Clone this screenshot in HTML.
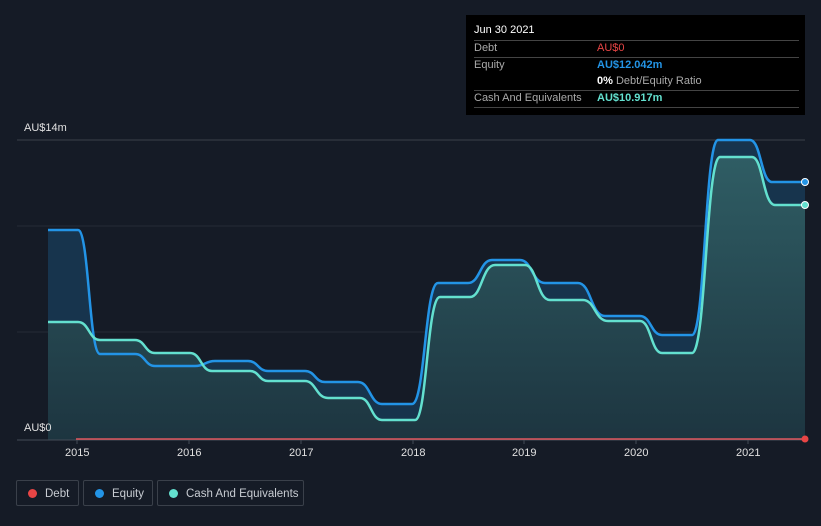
<!DOCTYPE html>
<html><head><style>
body{margin:0;width:821px;height:526px;background:#151b26;font-family:"Liberation Sans",sans-serif;overflow:hidden;position:relative}
.tt{position:absolute;left:466px;top:15px;width:339px;height:100px;background:#000;color:#aaa;font-size:11px}
.tt .r{position:absolute;left:8px;right:6px;border-top:1px solid #444;height:16px}
.tt span{position:absolute;top:1px;white-space:nowrap}
.lg{position:absolute;top:480px;height:26px;border:1px solid #3a404a;border-radius:2px;color:#c8ccd2;font-size:11.5px;line-height:26px;box-sizing:border-box;white-space:nowrap}
.lg i{position:absolute;left:11px;top:8px;width:9px;height:9px;border-radius:50%}
.lg b{font-weight:normal;position:absolute;left:28px;top:0;white-space:nowrap}
.ax{position:absolute;color:#e0e0e0;font-size:11px}
</style></head><body>
<svg width="821" height="526" style="position:absolute;left:0;top:0">
<defs><linearGradient id="g" x1="0" y1="0" x2="0" y2="1"><stop offset="0" stop-color="#2f5d64"/><stop offset="1" stop-color="#1d3540"/></linearGradient></defs>
<line x1="17" y1="140" x2="805" y2="140" stroke="#3a404a"/>
<line x1="17" y1="226" x2="805" y2="226" stroke="#252b36"/>
<line x1="17" y1="332" x2="805" y2="332" stroke="#252b36"/>
<path d="M48 230 L78 230 C89 230 89 354 100 354 L135 354 C145 354 145 366 155 366 L195 366 C205 366 205 361 215 361 L248 361 C258 361 258 371 268 371 L305 371 C315 371 315 382 325 382 L358 382 C370 382 370 404 382 404 L412 404 C425 404 425 283 438 283 L468 283 C480 283 480 260 492 260 L520 260 C532 260 532 283 545 283 L578 283 C591 283 591 316 605 316 L640 316 C651 316 651 335 662 335 L692 335 C705 335 705 140 718 140 L750 140 C761 140 761 182 772 182 L805 182 L805 440 L48 440Z" fill="#17344d"/>
<path d="M48 322 L78 322 C89 322 89 340 100 340 L135 340 C145 340 145 353 155 353 L190 353 C201 353 201 371 212 371 L250 371 C259 371 259 381 268 381 L305 381 C316 381 316 398 328 398 L360 398 C371 398 371 420 382 420 L415 420 C427 420 427 297 440 297 L470 297 C482 297 482 265 495 265 L525 265 C537 265 537 300 550 300 L583 300 C595 300 595 321 608 321 L640 321 C651 321 651 353 662 353 L692 353 C706 353 706 157 720 157 L752 157 C763 157 763 205 775 205 L805 205 L805 440 L48 440Z" fill="url(#g)"/>
<path d="M48 230 L78 230 C89 230 89 354 100 354 L135 354 C145 354 145 366 155 366 L195 366 C205 366 205 361 215 361 L248 361 C258 361 258 371 268 371 L305 371 C315 371 315 382 325 382 L358 382 C370 382 370 404 382 404 L412 404 C425 404 425 283 438 283 L468 283 C480 283 480 260 492 260 L520 260 C532 260 532 283 545 283 L578 283 C591 283 591 316 605 316 L640 316 C651 316 651 335 662 335 L692 335 C705 335 705 140 718 140 L750 140 C761 140 761 182 772 182 L805 182" fill="none" stroke="#2394e6" stroke-width="2.5"/>
<path d="M48 322 L78 322 C89 322 89 340 100 340 L135 340 C145 340 145 353 155 353 L190 353 C201 353 201 371 212 371 L250 371 C259 371 259 381 268 381 L305 381 C316 381 316 398 328 398 L360 398 C371 398 371 420 382 420 L415 420 C427 420 427 297 440 297 L470 297 C482 297 482 265 495 265 L525 265 C537 265 537 300 550 300 L583 300 C595 300 595 321 608 321 L640 321 C651 321 651 353 662 353 L692 353 C706 353 706 157 720 157 L752 157 C763 157 763 205 775 205 L805 205" fill="none" stroke="#63e0cf" stroke-width="2.5"/>
<line x1="17" y1="440" x2="805" y2="440" stroke="#444b56"/>
<line x1="76" y1="439" x2="805" y2="439" stroke="#e0585f" stroke-width="1.5"/>
<circle cx="805" cy="182" r="3.5" fill="#2394e6" stroke="#fff" stroke-width="1"/>
<circle cx="805" cy="205" r="3.5" fill="#63e0cf" stroke="#fff" stroke-width="1"/>
<circle cx="805" cy="439" r="3.5" fill="#e84545"/>
<g stroke="#444b56"><line x1="77" y1="440" x2="77" y2="444"/><line x1="189" y1="440" x2="189" y2="444"/><line x1="301" y1="440" x2="301" y2="444"/><line x1="413" y1="440" x2="413" y2="444"/><line x1="524" y1="440" x2="524" y2="444"/><line x1="636" y1="440" x2="636" y2="444"/><line x1="748" y1="440" x2="748" y2="444"/></g>
</svg>
<div class="ax" style="left:24px;top:122px">AU$14m</div>
<div class="ax" style="left:24px;top:422px">AU$0</div>
<div class="ax" style="left:65px;top:447px">2015</div>
<div class="ax" style="left:177px;top:447px">2016</div>
<div class="ax" style="left:289px;top:447px">2017</div>
<div class="ax" style="left:401px;top:447px">2018</div>
<div class="ax" style="left:512px;top:447px">2019</div>
<div class="ax" style="left:624px;top:447px">2020</div>
<div class="ax" style="left:736px;top:447px">2021</div>
<div class="tt">
<div style="position:absolute;left:8px;top:9px;color:#fff">Jun 30 2021</div>
<div class="r" style="top:25px"><span style="left:0">Debt</span><span style="left:123px;color:#e84545">AU$0</span></div>
<div class="r" style="top:42px"><span style="left:0">Equity</span><span style="left:123px;color:#2394e6;font-weight:bold">AU$12.042m</span></div>
<div style="position:absolute;left:131px;top:60px;white-space:nowrap"><b style="color:#fff">0%</b> Debt/Equity Ratio</div>
<div class="r" style="top:75px"><span style="left:0">Cash And Equivalents</span><span style="left:123px;color:#63e0cf;font-weight:bold">AU$10.917m</span></div>
<div class="r" style="top:92px;height:0"></div>
</div>
<div class="lg" style="left:16px;width:63px"><i style="background:#e84545"></i><b>Debt</b></div>
<div class="lg" style="left:83px;width:70px"><i style="background:#2394e6"></i><b>Equity</b></div>
<div class="lg" style="left:157px;width:147px"><i style="background:#63e0cf"></i><b>Cash And Equivalents</b></div>
</body></html>
